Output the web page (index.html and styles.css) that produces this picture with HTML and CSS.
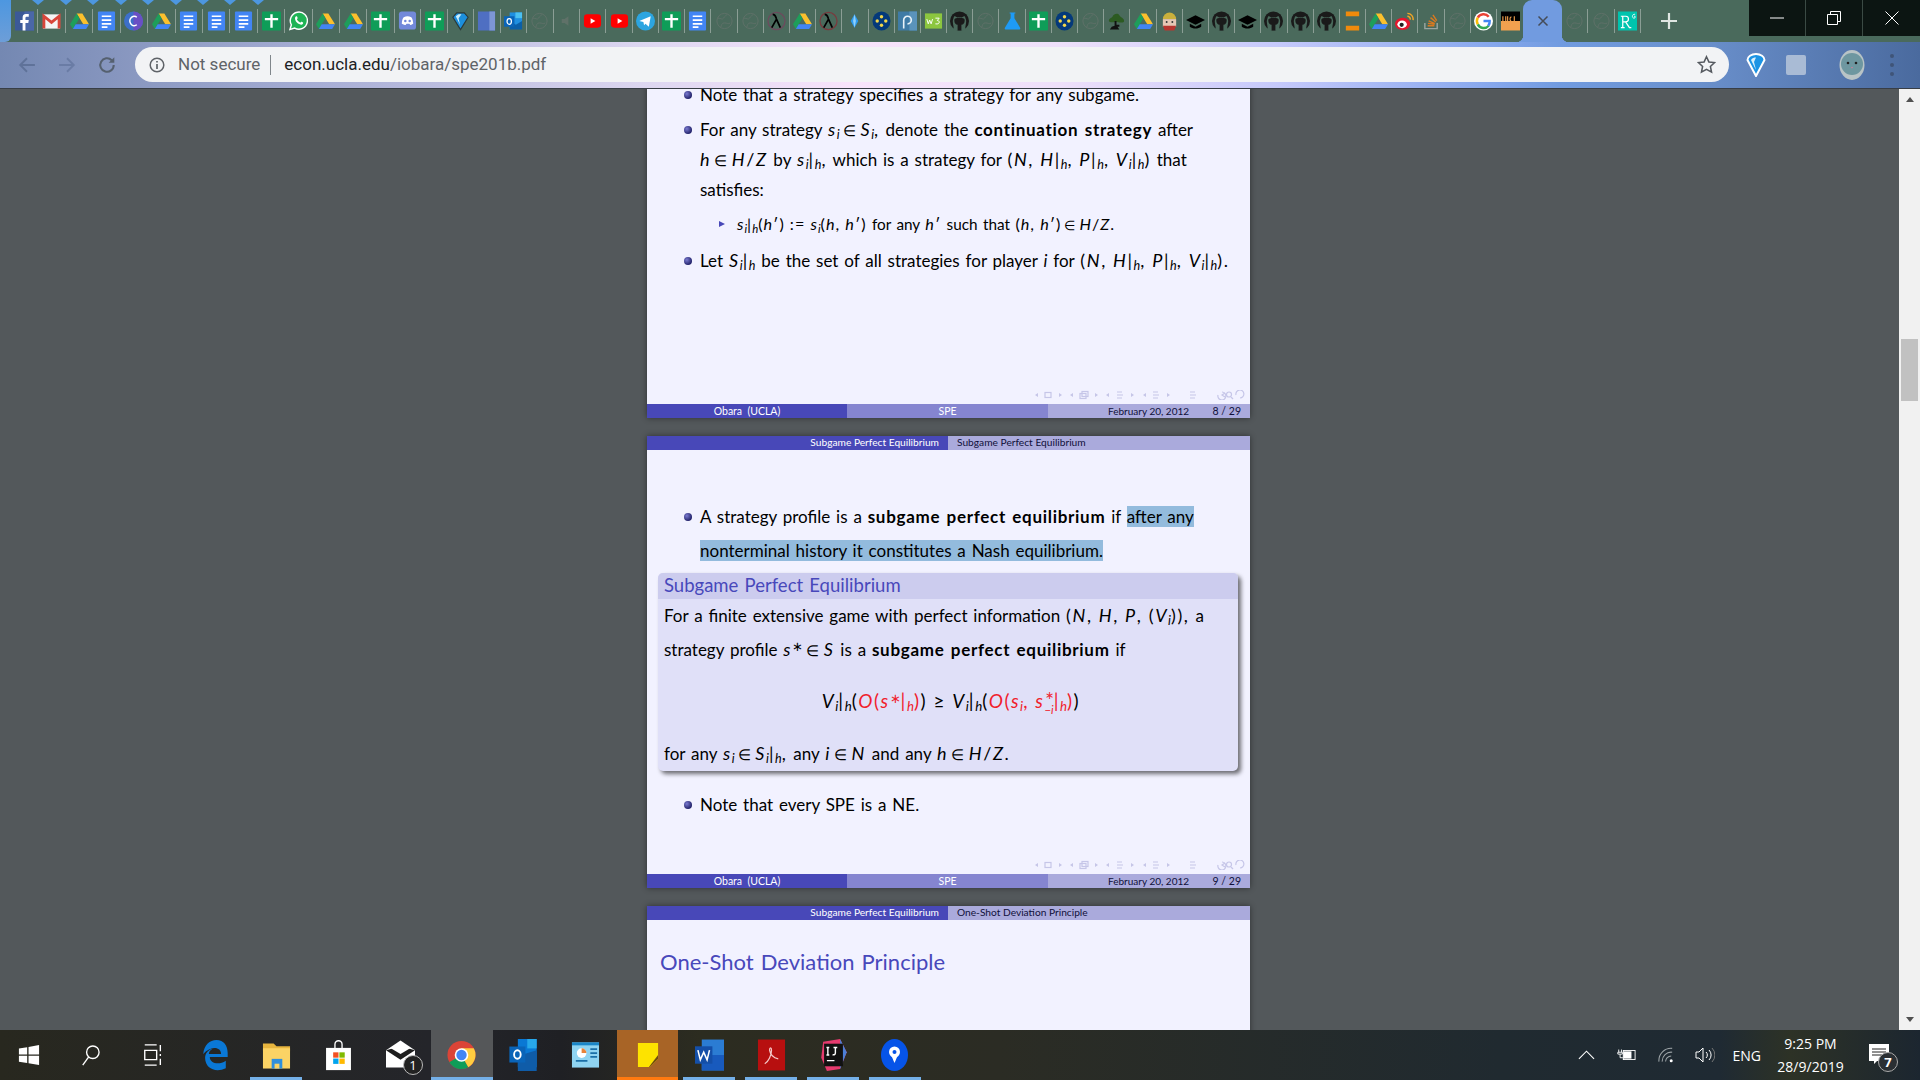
FILE: index.html
```html
<!DOCTYPE html>
<html lang="en">
<head>
  <meta charset="UTF-8" />
  <title>spe201b.pdf</title>
  <link rel="stylesheet" href="styles.css">
</head>
<body>

<svg class="defs" width="0" height="0">
  <symbol id="i-fb" viewBox="0 0 20 20"><rect x="0" y="0" width="20" height="20" fill="#3b5998"/><rect x="10" width="10" height="20" fill="#4a67a8"/><path d="M11 20v-8h3l.5-3H11V7c0-1 .5-1.500 1.500-1.500h2V2.500h-3C9 2.500 8 4 8 6.500V9H5.500v3H8v8z" fill="#fff"/></symbol>
  <symbol id="i-gmail" viewBox="0 0 20 20"><rect x="1" y="3" width="18" height="15" fill="#f4f4f4"/><path d="M2 18V5l8 6.500L18 5v13" fill="none" stroke="#d8453a" stroke-width="3"/></symbol>
  <symbol id="i-drive" viewBox="0 0 20 20"><path d="M7 2h6l7 11.500h-6z" fill="#fbc02d"/><path d="M7 2L0 13.500l3 5L10 7z" fill="#1e9e5a"/><path d="M3 18.500h14l3-5H6z" fill="#4285f4"/></symbol>
  <symbol id="i-docs" viewBox="0 0 20 20"><rect x="1" width="18" height="20" rx="1" fill="#4285f4"/><path d="M5 5h10M5 9h10M5 13h10M5 16.500h6" stroke="#fff" stroke-width="1.800"/></symbol>
  <symbol id="i-sheets" viewBox="0 0 20 20"><rect x="0" width="20" height="20" rx="1" fill="#0f9d58"/><path d="M10 3v14M3 8h14" stroke="#fff" stroke-width="2.500"/></symbol>
  <symbol id="i-wa" viewBox="0 0 20 20"><path d="M1 19l1.500-5A9 9 0 1 1 6 17.500z" fill="#1fb355" stroke="#fff" stroke-width="1.500"/><path d="M6.500 6c1-1.500 2-1 2.500.5.300 1-1 1.500-.500 2.300.700 1.200 1.700 2.200 3 2.700.800.300 1.200-1 2-.700 1.500.600 2 1.500.700 2.700-2 1.500-9-2.500-7.700-7.500z" fill="#fff"/></symbol>
  <symbol id="i-discord" viewBox="0 0 20 20"><rect x="1" width="18" height="19" rx="3" fill="#7289da"/><path d="M4 13c0-3 1-6 2-7 3-1.300 5-1.300 8 0 1 1 2 4 2 7-1.500 1-2.500 1.300-3 1.300l-1-1.300H9l-1 1.300c-.5 0-2.500-.3-4-1.300z" fill="#fff"/><circle cx="7.700" cy="10" r="1.300" fill="#7289da"/><circle cx="12.300" cy="10" r="1.300" fill="#7289da"/></symbol>
  <symbol id="i-gem" viewBox="0 0 20 20"><path d="M2 6l4-4.500h8L18 6l-8 13z" fill="#1c8fdc" stroke="#2a3a3a" stroke-width="1.200"/><path d="M5 5l3-2h3L8 7l1.500 7z" fill="#cdeefa"/></symbol>
  <symbol id="i-book" viewBox="0 0 20 20"><rect x="1" y="0" width="18" height="20" fill="#4f6fc2"/><rect x="13" y="0" width="6" height="20" fill="#7d96d6"/></symbol>
  <symbol id="i-globe" viewBox="0 0 20 20"><g fill="none" stroke="#5f7168" stroke-width="1"><circle cx="10" cy="10" r="8"/><path d="M3 7c3 0 5 2 6 0s3-3 4-4M6 17c1-3 1-5 4-5s4 2 6 0"/></g></symbol>
  <symbol id="i-speaker" viewBox="0 0 20 20"><path d="M5 8h3l4-3v10l-4-3H5z" fill="#5f7168"/></symbol>
  <symbol id="i-yt" viewBox="0 0 20 20"><rect x="1" y="3" width="18" height="14" rx="3.500" fill="#f00"/><path d="M8 7l5 3-5 3z" fill="#fff"/></symbol>
  <symbol id="i-telegram" viewBox="0 0 20 20"><circle cx="10" cy="10" r="10" fill="#2ca5e0"/><path d="M3.500 10L15.500 5l-2 11-3.500-3-1.500 1.500-.700-3.500z" fill="#fff"/></symbol>
  <symbol id="i-spark" viewBox="0 0 20 20"><path d="M10 3l4 7-4 7-4-7z" fill="#2d9bf0"/><path d="M10 3l-1.500 7 1.500 7 1.500-7z" fill="#8fd0fa"/></symbol>
  <symbol id="i-dots" viewBox="0 0 20 20"><ellipse cx="10" cy="10" rx="9.500" ry="10" fill="#04397a"/><g fill="#f2d64b"><circle cx="10" cy="5.500" r="1.800"/><circle cx="5.500" cy="10" r="1.800"/><circle cx="14.500" cy="10" r="1.800"/><circle cx="10" cy="14.500" r="1.800"/></g></symbol>
  <symbol id="i-p" viewBox="0 0 20 20"><rect x="0" width="20" height="20" fill="#3f7ba6"/><rect x="12" width="8" height="20" fill="#5a93bb"/><path d="M6 18V9a4 4 0 1 1 4 4" fill="none" stroke="#e8f2f8" stroke-width="1.700"/></symbol>
  <symbol id="i-github" viewBox="0 0 20 20"><circle cx="10" cy="10" r="10" fill="#1a1a1a"/><path d="M4 20c0-6-2-9-.5-12 .3-1.500.7-3 1-3 1 0 2 .5 3 1.300 1.500-.4 3.500-.4 5 0C13.500 5.500 14.500 5 15.500 5c.3 0 .7 1.500 1 3C18 11 16 14 16 20z" fill="#4a6a5c"/><path d="M8 14c-2 0-3.500-1.500-3.500-5 0-1.500 2-2.300 5.500-2.300S15.500 7.500 15.500 9c0 3.500-1.500 5-3.500 5v6H8z" fill="#1a1a1a"/></symbol>
  <symbol id="i-flask" viewBox="0 0 20 20"><path d="M7 1h6v1h-1v5l6 10c.500 1.500 0 2-1 2H3c-1 0-1.500-.5-1-2L8 7V2H7z" fill="#1e9bf5"/></symbol>
  <symbol id="i-tree" viewBox="0 0 20 20"><path d="M2 10c0-3 3-3 4-5s5-4 7-1 5 3 5 6-7 1-8 1-8 1-8-1z" fill="#2c5b22"/><path d="M8 10h2v4h3v2H11l2 3H3l2-3 3-1z" fill="#111"/></symbol>
  <symbol id="i-mascot" viewBox="0 0 20 20"><path d="M3 8a7 7 0 0 1 14 0z" fill="#c9b03c"/><rect x="3" y="8" width="14" height="8" fill="#e6c8b4"/><circle cx="7" cy="11" r="1" fill="#333"/><circle cx="13" cy="11" r="1" fill="#333"/><path d="M3 15h14l-2 5H5z" fill="#b8362e"/></symbol>
  <symbol id="i-cap" viewBox="0 0 20 20"><path d="M10 4l10 5-10 5L0 9z" fill="#000"/><path d="M4 13v3c3 2.500 9 2.500 12 0v-3l-6 3z" fill="#000"/></symbol>
  <symbol id="i-bars" viewBox="0 0 20 20"><rect x="3" y="0" width="14" height="5" fill="#f08a0c"/><rect x="3" y="15" width="14" height="5" fill="#f08a0c"/></symbol>
  <symbol id="i-weibo" viewBox="0 0 20 20"><ellipse cx="8" cy="13" rx="8" ry="6.500" fill="#e6162d"/><ellipse cx="7.500" cy="13.500" rx="5" ry="4" fill="#fff"/><circle cx="7" cy="14" r="2.200" fill="#222"/><path d="M13 2a6 6 0 0 1 6 7M13 5a3 3 0 0 1 3 3.500" fill="none" stroke="#f5a623" stroke-width="1.500"/></symbol>
  <symbol id="i-so" viewBox="0 0 20 20"><path d="M3 12v6h13v-6" fill="none" stroke="#9aa5a0" stroke-width="1.500"/><path d="M6 15h7M6.300 12.500l7 1M7 9.800l6.500 3M9 6.500l5.500 4.500M11.500 3.500l4 6" stroke="#d9791f" stroke-width="1.500"/></symbol>
  <symbol id="i-google" viewBox="0 0 20 20"><circle cx="10" cy="10" r="10" fill="#fff"/><path d="M15.500 5.500A7 7 0 0 0 4 6.500" fill="none" stroke="#ea4335" stroke-width="2.600"/><path d="M4 6.500a7 7 0 0 0 0 7" fill="none" stroke="#fbbc05" stroke-width="2.600"/><path d="M4 13.500a7 7 0 0 0 11.500 1.500" fill="none" stroke="#34a853" stroke-width="2.600"/><path d="M10 10h6.500a7 7 0 0 1-1.500 5" fill="none" stroke="#4285f4" stroke-width="2.600"/></symbol>
  <symbol id="i-nav" viewBox="0 0 210 10">
    <g fill="#c6c6e8">
      <path d="M3 3v4L0 5zM24 3v4l3-2zM38 3v4l-3-2zM60 3v4l3-2zM74 3v4l-3-2zM96 3v4l3-2zM111 3v4l-3-2zM132 3v4l3-2z"/>
    </g>
    <g fill="none" stroke="#c6c6e8" stroke-width="1.200">
      <rect x="10" y="2.500" width="6" height="5"/>
      <rect x="45" y="3.500" width="6" height="5"/><rect x="47" y="1.500" width="6" height="5"/>
      <path d="M82 2h5M82 5h6M82 8h5M118 2h5M118 5h6M118 8h5M155 2h5M155 5h6M155 8h5"/>
      <path d="M190 3l-3 2 3 2"/><path d="M183 5a4 4 0 1 0 4-3"/><circle cx="194" cy="4.500" r="2.500"/><path d="M196 7l2 2"/><path d="M201 5a4 4 0 1 1 4 3"/>
    </g>
  </symbol>
</svg>

<header class="browser">
  <div class="tabstrip">
    <div class="tab-edge"></div>
    <div class="tabs tabs-a">
      <div class="tab notch"><svg class="fav"><use href="#i-fb"/></svg></div>
      <div class="tab notch"><svg class="fav"><use href="#i-gmail"/></svg></div>
      <div class="tab notch"><svg class="fav"><use href="#i-drive"/></svg></div>
      <div class="tab notch"><svg class="fav"><use href="#i-docs"/></svg></div>
      <div class="tab notch"><svg class="fav" viewBox="0 0 20 20"><circle cx="10" cy="10" r="10" fill="#3d6fc9"/><path d="M10 0a10 10 0 0 1 0 20z" fill="#6a4fc4"/><path d="M13.500 6a4.500 5 0 1 0 0 8" fill="none" stroke="#fff" stroke-width="1.500"/></svg></div>
      <div class="tab notch"><svg class="fav"><use href="#i-drive"/></svg></div>
      <div class="tab notch"><svg class="fav"><use href="#i-docs"/></svg></div>
      <div class="tab notch"><svg class="fav"><use href="#i-docs"/></svg></div>
      <div class="tab notch"><svg class="fav"><use href="#i-docs"/></svg></div>
      <div class="tab"><svg class="fav"><use href="#i-sheets"/></svg></div>
      <div class="tab"><svg class="fav"><use href="#i-wa"/></svg></div>
      <div class="tab"><svg class="fav"><use href="#i-drive"/></svg></div>
      <div class="tab"><svg class="fav"><use href="#i-drive"/></svg></div>
      <div class="tab"><svg class="fav"><use href="#i-sheets"/></svg></div>
    </div>
    <div class="tabs tabs-b">
      <div class="tab"><svg class="fav"><use href="#i-discord"/></svg></div>
      <div class="tab"><svg class="fav"><use href="#i-sheets"/></svg></div>
      <div class="tab"><svg class="fav"><use href="#i-gem"/></svg></div>
      <div class="tab"><svg class="fav"><use href="#i-book"/></svg></div>
      <div class="tab"><svg class="fav" viewBox="0 0 20 20"><rect x="6" y="1" width="13" height="17" fill="#1f8fe0"/><rect x="12" y="1" width="7" height="6" fill="#4bc0f0"/><path d="M6 10l6.500 4L19 10v9H6z" fill="#0a5fa8"/><rect x="0" y="5" width="11" height="11" fill="#0a64b8"/><ellipse cx="5.500" cy="10.500" rx="2.300" ry="3" fill="none" stroke="#fff" stroke-width="1.300"/></svg></div>
      <div class="tab"><svg class="fav"><use href="#i-globe"/></svg></div>
      <div class="tab"><svg class="fav"><use href="#i-speaker"/></svg></div>
      <div class="tab"><svg class="fav"><use href="#i-yt"/></svg></div>
      <div class="tab"><svg class="fav"><use href="#i-yt"/></svg></div>
    </div>
    <div class="tabs tabs-c">
      <div class="tab"><svg class="fav"><use href="#i-telegram"/></svg></div>
      <div class="tab"><svg class="fav"><use href="#i-sheets"/></svg></div>
      <div class="tab"><svg class="fav"><use href="#i-docs"/></svg></div>
      <div class="tab"><svg class="fav"><use href="#i-globe"/></svg></div>
      <div class="tab"><svg class="fav"><use href="#i-globe"/></svg></div>
      <div class="tab"><svg class="fav" viewBox="0 0 20 20"><circle cx="10" cy="10" r="9" fill="none" stroke="#6e4a5e" stroke-width="1.300"/><path d="M5 17L10 8M6 3c3 0 3 2 4 5l4 9" fill="none" stroke="#000" stroke-width="1.800"/></svg></div>
      <div class="tab"><svg class="fav"><use href="#i-drive"/></svg></div>
      <div class="tab"><svg class="fav" viewBox="0 0 20 20"><circle cx="10" cy="10" r="9" fill="none" stroke="#7a3a3e" stroke-width="1.300"/><path d="M5 17L10 8M6 3c3 0 3 2 4 5l4 9" fill="none" stroke="#000" stroke-width="1.800"/></svg></div>
      <div class="tab"><svg class="fav"><use href="#i-spark"/></svg></div>
      <div class="tab"><svg class="fav"><use href="#i-dots"/></svg></div>
      <div class="tab"><svg class="fav"><use href="#i-p"/></svg></div>
      <div class="tab"><svg class="fav" viewBox="0 0 20 20"><rect x="1" y="2" width="18" height="16" fill="#8cc63f"/><path d="M3 8l1.500 5L6 9l1.500 4L9 8M12 7h4l-2 2.500c3 0 3 4.500-2 3.500" fill="none" stroke="#fff" stroke-width="1"/></svg></div>
      <div class="tab"><svg class="fav"><use href="#i-github"/></svg></div>
      <div class="tab"><svg class="fav"><use href="#i-globe"/></svg></div>
      <div class="tab"><svg class="fav"><use href="#i-flask"/></svg></div>
      <div class="tab"><svg class="fav"><use href="#i-sheets"/></svg></div>
      <div class="tab"><svg class="fav"><use href="#i-dots"/></svg></div>
      <div class="tab"><svg class="fav"><use href="#i-globe"/></svg></div>
      <div class="tab"><svg class="fav"><use href="#i-tree"/></svg></div>
      <div class="tab"><svg class="fav"><use href="#i-drive"/></svg></div>
      <div class="tab"><svg class="fav"><use href="#i-mascot"/></svg></div>
      <div class="tab"><svg class="fav"><use href="#i-cap"/></svg></div>
      <div class="tab"><svg class="fav"><use href="#i-github"/></svg></div>
      <div class="tab"><svg class="fav"><use href="#i-cap"/></svg></div>
      <div class="tab"><svg class="fav"><use href="#i-github"/></svg></div>
      <div class="tab"><svg class="fav"><use href="#i-github"/></svg></div>
      <div class="tab"><svg class="fav"><use href="#i-github"/></svg></div>
      <div class="tab"><svg class="fav"><use href="#i-bars"/></svg></div>
      <div class="tab"><svg class="fav"><use href="#i-drive"/></svg></div>
      <div class="tab"><svg class="fav"><use href="#i-weibo"/></svg></div>
      <div class="tab"><svg class="fav"><use href="#i-so"/></svg></div>
      <div class="tab"><svg class="fav"><use href="#i-globe"/></svg></div>
      <div class="tab"><svg class="fav"><use href="#i-google"/></svg></div>
      <div class="tab tab-plain"><svg class="fav" viewBox="0 0 20 20"><rect width="20" height="10" fill="#000"/><rect y="10" width="20" height="10" fill="#f2a14f"/><path d="M2 5v6h3V5M7 5v6M7 11h0M11 6c-2-1-2 5 0 4M14 5v6h3" fill="none" stroke="#f2a14f" stroke-width="1.200"/></svg></div>
    </div>
    <div class="tab-active">
      <svg class="tab-close" viewBox="0 0 12 12"><path d="M1.500 1.500l9 9M10.500 1.500l-9 9" stroke="#454c58" stroke-width="1.500"/></svg>
    </div>
    <div class="tabs tabs-c">
      <div class="tab"><svg class="fav"><use href="#i-globe"/></svg></div>
      <div class="tab"><svg class="fav"><use href="#i-globe"/></svg></div>
      <div class="tab"><svg class="fav" viewBox="0 0 20 20"><rect width="20" height="20" fill="#00c4ae"/><path d="M3 17h4M5 17V5M3 5h5c4 0 4 6 0 6H5M8 11l4 6h2" fill="none" stroke="#fff" stroke-width="1.300"/><path d="M18 3c-3-1-4 4-1 4l1-.5V5h-1" fill="none" stroke="#fff" stroke-width=".9"/></svg></div>
    </div>
    <svg class="new-tab" viewBox="0 0 16 16"><path d="M8 0v16M0 8h16" stroke="#dfe6e2" stroke-width="2.200"/></svg>
    <div class="win-controls">
      <div class="win-btn"><svg viewBox="0 0 14 14"><path d="M0 7h14" stroke="#fff" stroke-width="1"/></svg></div>
      <div class="win-btn"><svg viewBox="0 0 14 14"><path d="M.5 3.500h10v10H.5zM3.500 3.500V.5h10v10h-3" fill="none" stroke="#fff" stroke-width="1"/></svg></div>
      <div class="win-btn"><svg viewBox="0 0 14 14"><path d="M.5.5l13 13M13.500.5l-13 13" stroke="#fff" stroke-width="1"/></svg></div>
    </div>
  </div>

  <div class="toolbar">
    <div class="nav-btn"><svg viewBox="0 0 16 16"><path d="M15 8H2M8 2L2 8l6 6" fill="none" stroke="#5f7299" stroke-width="1.700"/></svg></div>
    <div class="nav-btn"><svg viewBox="0 0 16 16"><path d="M1 8h13M8 2l6 6-6 6" fill="none" stroke="#6a7ca5" stroke-width="1.700"/></svg></div>
    <div class="nav-btn"><svg viewBox="0 0 16 16"><path d="M14 8a6 6 0 1 1-1.800-4.300" fill="none" stroke="#55606f" stroke-width="1.800"/><path d="M14.500 1v5h-5z" fill="#55606f"/></svg></div>
    <div class="omnibox">
      <svg class="info-ico" viewBox="0 0 16 16"><circle cx="8" cy="8" r="6.800" fill="none" stroke="#5f6368" stroke-width="1.500"/><path d="M8 7v5M8 4v1.600" stroke="#5f6368" stroke-width="1.700"/></svg>
      <span class="not-secure">Not secure</span>
      <span class="omni-sep"></span>
      <span class="url"><b>econ.ucla.edu</b>/iobara/spe201b.pdf</span>
      <svg class="star" viewBox="0 0 20 20"><path d="M10 1.800l2.500 5.500 6 .7-4.400 4 1.200 6L10 15l-5.300 3 1.200-6-4.400-4 6-.7z" fill="none" stroke="#55595f" stroke-width="1.600"/></svg>
    </div>
    <div class="tool-btns">
      <div class="tool-btn"><svg class="tool-gem" viewBox="0 0 20 24"><path d="M1.500 7a8.500 6 0 0 1 17 0L10 23z" fill="#1c94e4" stroke="#fff" stroke-width="2"/><path d="M5 7c1-2 3-2.500 5-2.500L8 9l2 8z" fill="#d8f0fb"/></svg></div>
      <div class="tool-btn"><div class="ext-square"></div></div>
      <div class="tool-btn avatar-slot">
        <svg class="avatar" viewBox="0 0 26 30"><ellipse cx="13" cy="15" rx="12.500" ry="15" fill="#b9c4c6"/><ellipse cx="13" cy="14" rx="11" ry="11" fill="#6e97a0"/><circle cx="9" cy="13" r="1.300" fill="#222"/><circle cx="17" cy="13" r="1.300" fill="#222"/><path d="M12 17h2l-1 1.500z" fill="#e07a9a"/></svg>
      </div>
      <div class="tool-btn"><div class="kebab"><i></i><i></i><i></i></div></div>
    </div>
  </div>
</header>

<main class="viewer">
  <div class="pages">

    <section class="slide slide-first">
      <div class="slide-body">
        <p class="item"><span class="bullet"></span>Note that a strategy specifies a strategy for any subgame.</p>
        <p class="item gap"><span class="bullet"></span>For any strategy <span class="f"><i>s<sub>i</sub></i><span class="in">∈</span><i>S<sub>i</sub></i>,</span> denote the <b>continuation strategy</b> after<br>
          <span class="f"><i>h</i><span class="in">∈</span><i>H</i>/<i>Z</i></span> by <span class="f"><i>s<sub>i</sub></i>|<sub><i>h</i></sub>,</span> which is a strategy for <span class="f">(<i>N</i>, <i>H</i>|<sub><i>h</i></sub>, <i>P</i>|<sub><i>h</i></sub>, <i>V<sub>i</sub></i>|<sub><i>h</i></sub>)</span> that<br>
          satisfies:</p>
        <p class="subitem"><span class="tri"></span><span class="f"><i>s<sub>i</sub></i>|<sub><i>h</i></sub>(<i>h</i>′) := <i>s<sub>i</sub></i>(<i>h</i>, <i>h</i>′)</span> for any <span class="f"><i>h</i>′</span> such that <span class="f">(<i>h</i>, <i>h</i>′)<span class="in">∈</span><i>H</i>/<i>Z</i>.</span></p>
        <p class="item gap-l"><span class="bullet"></span>Let <span class="f"><i>S<sub>i</sub></i>|<sub><i>h</i></sub></span> be the set of all strategies for player <i>i</i> for <span class="f">(<i>N</i>, <i>H</i>|<sub><i>h</i></sub>, <i>P</i>|<sub><i>h</i></sub>, <i>V<sub>i</sub></i>|<sub><i>h</i></sub>).</span></p>
      </div>
      <div class="slide-nav"><svg><use href="#i-nav"/></svg></div>
      <footer class="slide-foot">
        <span class="foot-a">Obara  (UCLA)</span><span class="foot-b">SPE</span>
        <span class="foot-c"><span class="foot-date">February 20, 2012</span><span>8 / 29</span></span>
      </footer>
    </section>

    <section class="slide">
      <div class="slide-head"><span class="head-a">Subgame Perfect Equilibrium</span><span class="head-b">Subgame Perfect Equilibrium</span></div>
      <div class="slide-body body-spe">
        <p class="item tall"><span class="bullet"></span>A strategy profile is a <b>subgame perfect equilibrium</b> if <mark>after any</mark><br>
          <mark>nonterminal history it constitutes a Nash equilibrium.</mark></p>
        <div class="block">
          <h3 class="block-title">Subgame Perfect Equilibrium</h3>
          <div class="block-body">
            <p>For a finite extensive game with perfect information <span class="f">(<i>N</i>, <i>H</i>, <i>P</i>, (<i>V<sub>i</sub></i>)),</span> a<br>
              strategy profile <span class="f"><i>s</i><sup>∗</sup><span class="in">∈</span><i>S</i></span> is a <b>subgame perfect equilibrium</b> if</p>
            <p class="math"><span class="f"><i>V<sub>i</sub></i>|<sub><i>h</i></sub>(<span class="red"><i>O</i>(<i>s</i><sup>∗</sup>|<sub><i>h</i></sub>)</span>) ≥ <i>V<sub>i</sub></i>|<sub><i>h</i></sub>(<span class="red"><i>O</i>(<i>s<sub>i</sub></i>, <i>s</i><span class="supsub"><span>∗</span><span>−<i>i</i></span></span>|<sub><i>h</i></sub>)</span>)</span></p>
            <p>for any <span class="f"><i>s<sub>i</sub></i><span class="in">∈</span><i>S<sub>i</sub></i>|<sub><i>h</i></sub>,</span> any <span class="f"><i>i</i><span class="in">∈</span><i>N</i></span> and any <span class="f"><i>h</i><span class="in">∈</span><i>H</i>/<i>Z</i>.</span></p>
          </div>
        </div>
        <p class="item tall after-block"><span class="bullet"></span>Note that every SPE is a NE.</p>
      </div>
      <div class="slide-nav"><svg><use href="#i-nav"/></svg></div>
      <footer class="slide-foot">
        <span class="foot-a">Obara  (UCLA)</span><span class="foot-b">SPE</span>
        <span class="foot-c"><span class="foot-date">February 20, 2012</span><span>9 / 29</span></span>
      </footer>
    </section>

    <section class="slide">
      <div class="slide-head"><span class="head-a">Subgame Perfect Equilibrium</span><span class="head-b">One-Shot Deviation Principle</span></div>
      <div class="slide-body body-title">
        <h2 class="frame-title">One-Shot Deviation Principle</h2>
      </div>
    </section>

  </div>

  <aside class="scrollbar">
    <div class="sb-btn"><span class="sb-up"></span></div>
    <div class="sb-thumb"></div>
    <div class="sb-btn sb-end"><span class="sb-down"></span></div>
  </aside>
</main>

<footer class="taskbar">
  <div class="apps">
    <div class="app"><svg viewBox="0 0 24 24"><path d="M1 5l9-1.500V11.500H1zM11.500 3.200L23 1v10.500H11.500zM1 12.800h9v8L1 19.300zM11.500 12.800H23V23l-11.500-2z" fill="#fff"/></svg></div>
    <div class="app"><svg viewBox="0 0 24 24"><circle cx="14" cy="9" r="6.800" fill="none" stroke="#fff" stroke-width="1.500"/><path d="M9.500 14L3 23" stroke="#fff" stroke-width="1.500"/></svg></div>
    <div class="app"><svg viewBox="0 0 24 24"><path d="M3 1h13M3 23h13M3 7h13v10H3zM20 1v7M20 11v2M20 16v7" fill="none" stroke="#fff" stroke-width="1.500"/></svg></div>
    <div class="app"><svg class="app-lg" viewBox="0 0 30 34"><path d="M3 16C4 6 10 1 17 1c8 0 12 6 12 14v4H10c0 7 10 9 17 4v8c-10 5-22 1-22-11 0-5 4-9 8-10-3 2-4 4-4 6h13c0-8-11-9-19 0z" fill="#0a78d6"/></svg></div>
    <div class="app running"><svg class="app-lg" viewBox="0 0 30 30"><path d="M1 3h11l3 3h14v5H1z" fill="#e7b53e"/><rect x="1" y="8" width="28" height="21" fill="#fbd365"/><rect x="10" y="19" width="11" height="10" fill="#2f8fdc"/><rect x="13" y="24" width="5" height="5" fill="#fbd365"/></svg></div>
    <div class="app"><svg class="app-lg" viewBox="0 0 30 36"><path d="M11 10V6a4 4 0 0 1 8 0v4" fill="none" stroke="#fff" stroke-width="1.500"/><rect x="1" y="10" width="28" height="25" fill="#fff"/><rect x="9" y="15" width="6" height="6" fill="#f25022"/><rect x="16" y="15" width="6" height="6" fill="#7fba00"/><rect x="9" y="22" width="6" height="6" fill="#00a4ef"/><rect x="16" y="22" width="6" height="6" fill="#ffb900"/></svg></div>
    <div class="app app-mail"><svg class="app-lg" viewBox="0 0 30 30"><path d="M0 10L15 0l15 10v18H0z" fill="#fff"/><path d="M0 10l15 10 15-10-15-4z" fill="#1d1d1d"/><path d="M5 8l10-6 10 6-10 6z" fill="#fff"/></svg><span class="app-badge">1</span></div>
    <div class="app active"><svg class="app-lg" viewBox="0 0 32 32"><circle cx="16" cy="16" r="15.500" fill="#db4437"/><path d="M16 16L2.500 24a15.500 15.500 0 0 0 21 5.500z" fill="#0f9d58"/><path d="M16 8.500h13.500a15.500 15.500 0 0 1-6 21L16 16z" fill="#ffcd40"/><circle cx="16" cy="16" r="7.500" fill="#fff"/><circle cx="16" cy="16" r="5.700" fill="#4285f4"/></svg></div>
    <div class="app"><svg class="app-lg" viewBox="0 0 30 34"><rect x="9" y="0" width="20" height="30" fill="#0a78d4"/><rect x="19" y="0" width="10" height="10" fill="#28a8ea"/><path d="M9 18l20-6v22H9z" fill="#0f5ca8"/><rect x="0" y="8" width="17" height="17" fill="#0a64b8"/><ellipse cx="8.500" cy="16.500" rx="3.500" ry="4.500" fill="none" stroke="#fff" stroke-width="2"/></svg></div>
    <div class="app"><svg class="app-lg" viewBox="0 0 30 30"><rect x="1" y="2" width="28" height="26" fill="#8fd4f2"/><rect x="1" y="2" width="28" height="3" fill="#1a86c8"/><circle cx="11" cy="13" r="5" fill="#fff"/><path d="M11 13V8a5 5 0 0 1 5 5z" fill="#e8833a"/><path d="M5 21h12M20 9h7M20 13h7M20 17h7" stroke="#1a6fa8" stroke-width="1.800"/></svg></div>
    <div class="app sticky"><svg class="app-sticky" viewBox="0 0 24 28"><path d="M1 1h22v17l-9 9H1z" fill="#fde300"/><path d="M23 14v4l-9 9h-1z" fill="#6e4c12"/></svg></div>
    <div class="app running"><svg class="app-lg" viewBox="0 0 30 32"><rect x="7" y="0" width="23" height="32" fill="#2b7cd3"/><rect x="7" y="16" width="23" height="16" fill="#185abd"/><rect x="0" y="7" width="18" height="18" fill="#144fa8"/><path d="M3 11l2.500 10L9 13l3.500 8L15 11" fill="none" stroke="#fff" stroke-width="1.600"/></svg></div>
    <div class="app running"><svg class="app-lg" viewBox="0 0 30 32"><rect x="1" y="0" width="28" height="32" fill="#b70f0f"/><path d="M8 25c4-2 7-9 7-14 0-3-2-3-2 0 1 6 4 8 9 9" fill="none" stroke="#f4c7c7" stroke-width="1.300"/></svg></div>
    <div class="app running"><svg class="app-lg" viewBox="0 0 30 34"><path d="M4 3l18-3 7 14-7 18-14 2-6-14z" fill="#e63a6e"/><path d="M22 0l7 14-7 18z" fill="#4a80d8"/><rect x="5" y="5" width="20" height="24" fill="#111"/><path d="M9 9v8M7.500 9h3M7.500 17h3M17 9v6c0 2-2 2-3 1.500M15 9h4M8 23h8" fill="none" stroke="#fff" stroke-width="1.500"/></svg></div>
    <div class="app running"><svg class="app-lg" viewBox="0 0 28 32"><ellipse cx="14" cy="16" rx="13.500" ry="16" fill="#0654e8"/><circle cx="14" cy="13" r="5.500" fill="#fff"/><circle cx="14" cy="13" r="2" fill="#0654e8"/><path d="M11 17h6l-3 7z" fill="#fff"/></svg></div>
  </div>
  <div class="tray">
    <svg class="tray-ico chev" viewBox="0 0 18 10"><path d="M1 9l8-8 8 8" fill="none" stroke="#fff" stroke-width="1.200"/></svg>
    <svg class="tray-ico batt" viewBox="0 0 22 12"><path d="M3 0v3M6 0v3M2 3h5v2H2zM4.500 5v4h3" fill="none" stroke="#fff" stroke-width="1"/><rect x="8" y="1" width="13" height="10" fill="none" stroke="#fff"/><rect x="8" y="2" width="9" height="8" fill="#fff"/></svg>
    <svg class="tray-ico wifi" viewBox="0 0 18 16"><path d="M1 15A13 13 0 0 1 15 1M4.500 15A9.500 9.500 0 0 1 15 5M8 15a6 6 0 0 1 6-6" fill="none" stroke="#9ea5a8" stroke-width="1.100"/><circle cx="14" cy="14" r="1.600" fill="#fff"/></svg>
    <svg class="tray-ico vol" viewBox="0 0 20 16"><path d="M1 5h3l4-4v14l-4-4H1zM11 5a4 4 0 0 1 0 6M14 3a7 7 0 0 1 0 10" fill="none" stroke="#fff" stroke-width="1"/><path d="M17 1a10 10 0 0 1 0 14" fill="none" stroke="#777" stroke-width="1"/></svg>
    <span class="lang">ENG</span>
    <div class="clock"><span>9:25 PM</span><span>28/9/2019</span></div>
    <div class="notif">
      <svg viewBox="0 0 20 20"><path d="M0 0h20v17H8l-3 3v-3H0z" fill="#fff"/><path d="M3 5h14M3 8h14M3 11h10" stroke="#222" stroke-width="1"/></svg>
      <span class="notif-badge">7</span>
    </div>
  </div>
</footer>

</body>
</html>
```

FILE: styles.css
```css
* {
  box-sizing: border-box;
}
html, body {
  margin: 0;
  height: 100%;
}
body {
  width: 1920px;
  height: 1080px;
  overflow: hidden;
  display: flex;
  flex-direction: column;
  font-family: "Lato", "Noto Sans", sans-serif;
  background-color: #53585b;
}
.defs {
  position: absolute;
}

/* tab strip */
.browser {
  flex: none;
}
.tabstrip {
  height: 42px;
  display: flex;
  align-items: flex-start;
  background-color: #4a6a5c;
  overflow: hidden;
}
.tab-edge {
  width: 11px;
  height: 42px;
  flex: none;
  background-color: #4d97e0;
  border-bottom-right-radius: 6px;
  background-image: linear-gradient(#4d97e0, #6d9ed8);
}
.tabs {
  display: flex;
  flex: none;
}
.tab {
  position: relative;
  height: 24px;
  margin-top: 9px;
  display: flex;
  align-items: center;
  justify-content: center;
  border-right: 1px solid #8b9e95;
  flex: none;
}
.tab-plain {
  border-right: none;
}
.tabs-a .tab {
  width: 27.43px;
}
.tabs-b .tab {
  width: 26.44px;
}
.tabs-c .tab {
  width: 26.2px;
}
.tab.notch::before {
  content: "";
  position: absolute;
  top: -9px;
  right: -7px;
  border-left: 6px solid transparent;
  border-right: 6px solid transparent;
  border-top: 5px solid #4d97e0;
}
.fav {
  width: 19px;
  height: 20px;
  flex: none;
}
.tab-active {
  position: relative;
  width: 39px;
  height: 42px;
  flex: none;
  display: flex;
  align-items: center;
  justify-content: center;
  background-color: #719be0;
  border-radius: 9px 9px 0 0;
}
.tab-active::before,
.tab-active::after {
  content: "";
  position: absolute;
  bottom: 0;
  width: 7px;
  height: 7px;
}
.tab-active::before {
  left: -7px;
  background: radial-gradient(circle at 0 0, transparent 7px, #719be0 7.5px);
}
.tab-active::after {
  right: -7px;
  background: radial-gradient(circle at 100% 0, transparent 7px, #729ade 7.5px);
}
.tab-close {
  width: 12px;
  height: 12px;
}
.new-tab {
  width: 16px;
  height: 16px;
  margin: 13px 0 0 20px;
  flex: none;
}
.win-controls {
  display: flex;
  height: 36px;
  margin-left: auto;
  background-color: #0c1512;
  flex: none;
}
.win-btn {
  width: 57px;
  height: 36px;
  display: flex;
  align-items: center;
  justify-content: center;
  border-right: 1px solid #3b4a44;
}
.win-btn:last-child {
  border-right: none;
}
.win-btn svg {
  width: 14px;
  height: 14px;
}

/* toolbar */
.toolbar {
  height: 47px;
  padding-left: 7px;
  display: flex;
  align-items: center;
  border-bottom: 1px solid #383e46;
  background: linear-gradient(90deg, #7488b2 0, #a9afd6 330px, #dcd6f0 640px, #f8e4fb 850px, #eee0fa 1060px, #c5c9fb 1280px, #8aa9ee 1480px, #719be0 1560px, #6a90cc 1700px, #4a6a9e 1920px);
}
.nav-btn {
  width: 40px;
  height: 40px;
  display: flex;
  align-items: center;
  justify-content: center;
  flex: none;
}
.nav-btn svg {
  width: 18px;
  height: 18px;
}
.omnibox {
  width: 1594px;
  height: 35px;
  margin: -1px 0 0 8px;
  padding: 0 13px 0 14px;
  display: flex;
  align-items: center;
  flex: none;
  background-color: #f2f3f5;
  border-radius: 18px;
  font-family: "Roboto", "Noto Sans", sans-serif;
  font-size: 17px;
  line-height: 33px;
  color: #5f6368;
}
.info-ico {
  width: 16px;
  height: 16px;
  flex: none;
}
.not-secure {
  margin-left: 13px;
}
.omni-sep {
  width: 1px;
  height: 20px;
  margin: 0 13px 0 10px;
  background-color: #80868b;
}
.url b {
  font-weight: 400;
  color: #202124;
}
.star {
  width: 19px;
  height: 19px;
  margin-left: auto;
}
.tool-btns {
  margin-left: 7px;
  display: flex;
  align-items: center;
}
.tool-btn {
  width: 40px;
  height: 40px;
  display: flex;
  align-items: center;
  justify-content: center;
}
.avatar-slot {
  margin-left: 16px;
}
.tool-gem {
  width: 20px;
  height: 24px;
}
.ext-square {
  width: 20px;
  height: 20px;
  border-radius: 2px;
  background-color: #a9bbd5;
}
.avatar {
  width: 26px;
  height: 30px;
}
.kebab {
  display: flex;
  flex-direction: column;
  gap: 5px;
}
.kebab i {
  width: 4px;
  height: 4px;
  border-radius: 50%;
  background-color: #3f5478;
}

/* pdf viewer */
.viewer {
  flex: 1;
  min-height: 0;
  display: flex;
}
.pages {
  flex: 1;
  overflow: hidden;
  display: flex;
  flex-direction: column;
  align-items: center;
  gap: 18px;
  padding-right: 2px;
}
.slide {
  width: 603px;
  height: 452px;
  flex: none;
  display: flex;
  flex-direction: column;
  background-color: #f2f2ff;
  box-shadow: 0 0 6px rgba(0, 0, 0, 0.45);
  color: #000;
  font-size: 17px;
  word-spacing: 1.5px;
}
.slide-first {
  margin-top: -123px;
}
.slide-first .slide-body {
  padding-top: 113.5px;
}
.slide-body {
  flex: 1;
  min-height: 0;
}
.slide p,
.slide h2,
.slide h3 {
  margin: 0;
}
.slide b {
  letter-spacing: 0.7px;
}
.slide-head {
  height: 14px;
  flex: none;
  display: flex;
  font-size: 10.2px;
  line-height: 12px;
  word-spacing: 0;
}
.head-a {
  width: 301px;
  padding-right: 9px;
  text-align: right;
  color: #fff;
  background-color: #4848b8;
}
.head-b {
  flex: 1;
  padding-left: 9px;
  background-color: #aaaadc;
  color: #10103a;
}
.slide-nav {
  height: 12px;
  margin-bottom: 2px;
  padding-left: 388px;
  flex: none;
}
.slide-nav svg {
  width: 210px;
  height: 10px;
  display: block;
}
.slide-foot {
  height: 14px;
  flex: none;
  display: flex;
  font-size: 10.5px;
  line-height: 15px;
  text-align: center;
  word-spacing: 0;
}
.foot-a {
  width: 200px;
  color: #fff;
  background-color: #4848b8;
  white-space: pre;
}
.foot-b {
  width: 201px;
  color: #fff;
  background-color: #8585d0;
}
.foot-c {
  flex: 1;
  padding: 0 9px 0 60px;
  display: flex;
  justify-content: space-between;
  color: #10103a;
  background-color: #aaaadc;
}
.foot-date {
  font-size: 10px;
}
.item {
  position: relative;
  padding-left: 53px;
  line-height: 30px;
  white-space: nowrap;
}
.slide .gap {
  margin-top: 5px;
}
.slide .gap-l {
  margin-top: 10px;
}
.item.tall {
  line-height: 34px;
}
.bullet {
  position: absolute;
  left: 37px;
  top: 11px;
  width: 8px;
  height: 8px;
  border-radius: 50%;
  background: radial-gradient(circle at 35% 35%, #7a7ad0, #24246c 70%);
}
.tall .bullet {
  top: 13px;
}
.slide .subitem {
  position: relative;
  margin-top: 7px;
  padding-left: 90px;
  font-size: 15.3px;
  line-height: 24px;
  white-space: nowrap;
}
.subitem .f {
  letter-spacing: 1px;
}
.tri {
  position: absolute;
  left: 72px;
  top: 9px;
  border-left: 6px solid #4848b8;
  border-top: 3px solid transparent;
  border-bottom: 3px solid transparent;
}
/* formulas: wider than running text, as in the pdf */
.f {
  font-size: 1.06em;
  line-height: 0;
  letter-spacing: 1.6px;
  word-spacing: 0;
}
.in {
  font-size: 0.82em;
  line-height: 0;
  margin: 0 3px;
}
sub,
sup {
  font-size: 0.7em;
  line-height: 0;
  letter-spacing: 0;
}
sub {
  vertical-align: -0.25em;
}
sup {
  vertical-align: 0.4em;
}
mark {
  background-color: #93bbdd;
  color: #000;
}
.body-spe {
  padding-top: 50px;
}
.block {
  margin: 5px 12px 0 11px;
  border-radius: 5px;
  background-color: #e0e0f8;
  box-shadow: 3px 3px 4px rgba(0, 0, 0, 0.55);
  line-height: 34px;
}
.block-title {
  height: 26px;
  padding-left: 6px;
  font-size: 18.5px;
  font-weight: 400;
  line-height: 25px;
  color: #4848bb;
  background-color: #ccccee;
  border-radius: 5px 5px 0 0;
}
.block-body {
  padding-left: 6px;
  white-space: nowrap;
}
.slide .math {
  height: 70px;
  line-height: 70px;
  text-align: center;
}
.math .f {
  font-size: 19px;
  letter-spacing: 1.5px;
}
.red {
  color: #f0202c;
}
.supsub {
  display: inline-flex;
  flex-direction: column;
  vertical-align: middle;
  font-size: 0.6em;
  line-height: 1.3em;
  letter-spacing: 0;
}
.slide .after-block {
  margin-top: 17px;
}
.body-title {
  padding: 25px 0 0 13px;
}
.frame-title {
  font-size: 22px;
  font-weight: 400;
  line-height: 34px;
  color: #4848bb;
}

/* scrollbar */
.scrollbar {
  width: 21px;
  flex: none;
  display: flex;
  flex-direction: column;
  background-color: #f1f1f1;
}
.sb-btn {
  height: 21px;
  display: flex;
  align-items: center;
  justify-content: center;
}
.sb-end {
  margin-top: auto;
}
.sb-up,
.sb-down {
  border-left: 4.500px solid transparent;
  border-right: 4.500px solid transparent;
}
.sb-up {
  border-bottom: 5px solid #505050;
}
.sb-down {
  border-top: 5px solid #505050;
}
.sb-thumb {
  height: 62px;
  margin: 229px 2px 0;
  background-color: #c1c1c1;
}

/* taskbar */
.taskbar {
  height: 50px;
  flex: none;
  display: flex;
  color: #fff;
  font-family: "Open Sans", "Noto Sans", sans-serif;
  background: linear-gradient(90deg, #28281f 0, #24252a 430px, #1f2024 560px, #2c2c20 700px, #2b2c24 1000px, #202a30 1500px, #1f2a33 1720px, #2d3226 1790px, #1c2630 1920px);
}
.apps {
  display: flex;
  margin-left: -2px;
}
.app {
  position: relative;
  width: 61.86px;
  display: flex;
  align-items: center;
  justify-content: center;
  flex: none;
}
.app svg {
  width: 22px;
  height: 22px;
}
.app .app-lg {
  width: 29px;
  height: 32px;
}
.app .app-sticky {
  width: 22px;
  height: 26px;
}
.app.running::after,
.app.active::after,
.app.sticky::after {
  content: "";
  position: absolute;
  left: 5px;
  right: 5px;
  bottom: 0;
  height: 3px;
  background-color: #74b0e8;
}
.app.active {
  background-color: #555759;
}
.app.active::after {
  left: 0;
  right: 0;
}
.app.sticky {
  background-color: #a86426;
}
.app.sticky::after {
  left: 0;
  right: 0;
  background-color: #ff7a10;
}
.app-badge {
  position: absolute;
  right: 8px;
  bottom: 5px;
  width: 20px;
  height: 20px;
  border: 1px solid #bbb;
  border-radius: 50%;
  background-color: #222;
  font-size: 13px;
  line-height: 18px;
  text-align: center;
}
.tray {
  margin-left: auto;
  padding-right: 5px;
  display: flex;
  align-items: center;
  position: relative;
  font-size: 14px;
}
.tray-ico {
  flex: none;
}
.chev {
  width: 17px;
  height: 10px;
}
.batt {
  width: 20px;
  height: 12px;
  margin-left: 21px;
}
.wifi {
  width: 17px;
  height: 16px;
  margin-left: 22px;
}
.vol {
  width: 20px;
  height: 16px;
  margin-left: 20px;
}
.lang {
  margin-left: 18px;
}
.clock {
  width: 96px;
  margin-left: 1.5px;
  display: flex;
  flex-direction: column;
  align-items: center;
  line-height: 23px;
}
.notif {
  position: relative;
  width: 22px;
  height: 22px;
  margin: 0 24px 0 10.5px;
}
.notif svg {
  width: 20px;
  height: 20px;
  display: block;
}
.notif-badge {
  position: absolute;
  left: 9px;
  top: 8px;
  width: 20px;
  height: 20px;
  border: 1px solid #aaa;
  border-radius: 50%;
  background-color: #2a2f33;
  font-size: 13px;
  font-weight: 700;
  line-height: 18px;
  text-align: center;
}
```
